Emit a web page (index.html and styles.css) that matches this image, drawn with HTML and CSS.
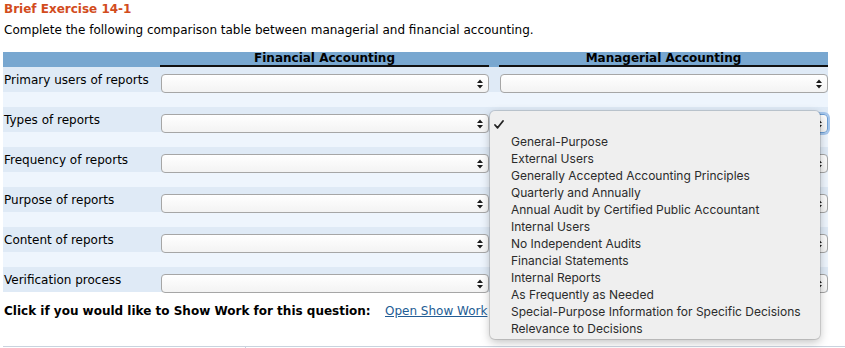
FILE: index.html
```html
<!DOCTYPE html>
<html>
<head>
<meta charset="utf-8">
<link rel="stylesheet" href="styles.css">
</head>
<body>
<div class="page">
  <h1 class="title">Brief Exercise 14-1</h1>
  <p class="intro">Complete the following comparison table between managerial and financial accounting.</p>

  <div class="table">
    <div class="head">
      <div class="hcell blank"></div>
      <div class="hcell col">Financial Accounting</div>
      <div class="hcell gap"></div>
      <div class="hcell col">Managerial Accounting</div>
    </div>

    <div class="row">
      <div class="label">Primary users of reports</div>
      <div class="sel"><svg class="arr" width="6" height="10" viewBox="0 0 6 10"><path d="M3 0.5L6 4H0Z M3 9.5L6 6H0Z" fill="#1a1a1a"/></svg></div>
      <div></div>
      <div class="sel"><svg class="arr" width="6" height="10" viewBox="0 0 6 10"><path d="M3 0.5L6 4H0Z M3 9.5L6 6H0Z" fill="#1a1a1a"/></svg></div>
    </div>
    <div class="spacer"></div>

    <div class="row">
      <div class="label">Types of reports</div>
      <div class="sel"><svg class="arr" width="6" height="10" viewBox="0 0 6 10"><path d="M3 0.5L6 4H0Z M3 9.5L6 6H0Z" fill="#1a1a1a"/></svg></div>
      <div></div>
      <div class="sel focus"><svg class="arr" width="6" height="10" viewBox="0 0 6 10"><path d="M3 0.5L6 4H0Z M3 9.5L6 6H0Z" fill="#1a1a1a"/></svg></div>
    </div>
    <div class="spacer"></div>

    <div class="row">
      <div class="label">Frequency of reports</div>
      <div class="sel"><svg class="arr" width="6" height="10" viewBox="0 0 6 10"><path d="M3 0.5L6 4H0Z M3 9.5L6 6H0Z" fill="#1a1a1a"/></svg></div>
      <div></div>
      <div class="sel"><svg class="arr" width="6" height="10" viewBox="0 0 6 10"><path d="M3 0.5L6 4H0Z M3 9.5L6 6H0Z" fill="#1a1a1a"/></svg></div>
    </div>
    <div class="spacer"></div>

    <div class="row">
      <div class="label">Purpose of reports</div>
      <div class="sel"><svg class="arr" width="6" height="10" viewBox="0 0 6 10"><path d="M3 0.5L6 4H0Z M3 9.5L6 6H0Z" fill="#1a1a1a"/></svg></div>
      <div></div>
      <div class="sel"><svg class="arr" width="6" height="10" viewBox="0 0 6 10"><path d="M3 0.5L6 4H0Z M3 9.5L6 6H0Z" fill="#1a1a1a"/></svg></div>
    </div>
    <div class="spacer"></div>

    <div class="row">
      <div class="label">Content of reports</div>
      <div class="sel"><svg class="arr" width="6" height="10" viewBox="0 0 6 10"><path d="M3 0.5L6 4H0Z M3 9.5L6 6H0Z" fill="#1a1a1a"/></svg></div>
      <div></div>
      <div class="sel"><svg class="arr" width="6" height="10" viewBox="0 0 6 10"><path d="M3 0.5L6 4H0Z M3 9.5L6 6H0Z" fill="#1a1a1a"/></svg></div>
    </div>
    <div class="spacer"></div>

    <div class="row">
      <div class="label">Verification process</div>
      <div class="sel"><svg class="arr" width="6" height="10" viewBox="0 0 6 10"><path d="M3 0.5L6 4H0Z M3 9.5L6 6H0Z" fill="#1a1a1a"/></svg></div>
      <div></div>
      <div class="sel"><svg class="arr" width="6" height="10" viewBox="0 0 6 10"><path d="M3 0.5L6 4H0Z M3 9.5L6 6H0Z" fill="#1a1a1a"/></svg></div>
    </div>
  </div>

  <div class="showwork">
    <span class="sw-label">Click if you would like to Show Work for this question:</span>
    <a class="sw-link" href="#">Open Show Work</a>
  </div>

  <div class="bottom">
    <div class="b1"></div>
    <div class="b2"></div>
  </div>

  <div class="popup">
    <div class="opt checked"><svg class="check" width="10" height="9" viewBox="0 0 10 9"><path d="M1 5L3.6 7.8L9 1" fill="none" stroke="#222" stroke-width="1.8" stroke-linecap="round" stroke-linejoin="round"/></svg></div>
    <div class="opt">General-Purpose</div>
    <div class="opt">External Users</div>
    <div class="opt">Generally Accepted Accounting Principles</div>
    <div class="opt">Quarterly and Annually</div>
    <div class="opt">Annual Audit by Certified Public Accountant</div>
    <div class="opt">Internal Users</div>
    <div class="opt">No Independent Audits</div>
    <div class="opt">Financial Statements</div>
    <div class="opt">Internal Reports</div>
    <div class="opt">As Frequently as Needed</div>
    <div class="opt">Special-Purpose Information for Specific Decisions</div>
    <div class="opt">Relevance to Decisions</div>
  </div>
</div>
</body>
</html>
```

FILE: styles.css
```css
html, body {
  margin: 0;
  padding: 0;
  background: #ffffff;
}

.page {
  position: relative;
  width: 845px;
  height: 348px;
  overflow: hidden;
  font-family: "DejaVu Sans", Verdana, sans-serif;
  font-size: 12px;
  color: #000;
}

.title {
  margin: 0;
  padding: 1px 0 0 4px;
  height: 18px;
  font-size: 12px;
  font-weight: bold;
  color: #d24c1d;
  line-height: 16px;
}

.intro {
  margin: 0;
  padding: 3px 0 0 4px;
  height: 30px;
  line-height: 16px;
}

.table {
  margin-left: 3px;
  width: 825px;
}

.head {
  display: grid;
  grid-template-columns: 157px 329px 10px 329px;
  height: 15px;
  background: #78a7d0;
}

.hcell {
  font-weight: bold;
  text-align: center;
  line-height: 13px;
  height: 13px;
}

.hcell.col {
  border-bottom: 2px solid #111;
}

.row {
  display: grid;
  grid-template-columns: 158px 328px 11px 328px;
  height: 25px;
  background: #dfeaf6;
  position: relative;
  z-index: 1;
}

.spacer {
  height: 15px;
  background: #eef5fd;
}

.label {
  padding-left: 1px;
  padding-top: 1px;
  line-height: 25px;
}

.sel {
  margin-top: 7px;
  height: 17px;
  border: 1px solid #a6a6a6;
  border-radius: 4px;
  background: linear-gradient(#ffffff, #f3f3f3);
  display: flex;
  align-items: center;
  justify-content: flex-end;
  padding-right: 5px;
}

.sel.focus {
  border-color: #6d9fd6;
  box-shadow: 0 0 0 2px #a5c6ec;
}

.arr {
  display: block;
}

.showwork {
  display: flex;
  align-items: center;
  height: 38px;
  padding-left: 4px;
  margin-bottom: 16px;
}

.sw-label {
  font-weight: bold;
  width: 381px;
}

.sw-link {
  color: #235c94;
  text-decoration: underline;
}

.bottom {
  display: flex;
  margin-left: 3px;
  height: 20px;
}

.b1 {
  width: 242px;
  border-top: 1px solid #c9d3de;
  border-right: 1px solid #c9d3de;
}

.b2 {
  flex: 1;
  border-top: 1px solid #c9d3de;
}

.popup {
  position: absolute;
  left: 490px;
  top: 111px;
  width: 330px;
  height: 228px;
  box-sizing: border-box;
  padding: 5px 0 2px 0;
  background: #efefef;
  border-radius: 5px;
  box-shadow: 0 0 0 1px rgba(0,0,0,0.12), 0 3px 10px rgba(0,0,0,0.25);
  font-family: Inter, "Liberation Sans", Arial, sans-serif;
  font-size: 12px;
  color: #2b2b2b;
  z-index: 5;
}

.opt {
  height: 17px;
  line-height: 17px;
  padding-left: 21px;
  white-space: nowrap;
}

.opt.checked {
  padding-left: 4px;
  display: flex;
  align-items: center;
}
```
